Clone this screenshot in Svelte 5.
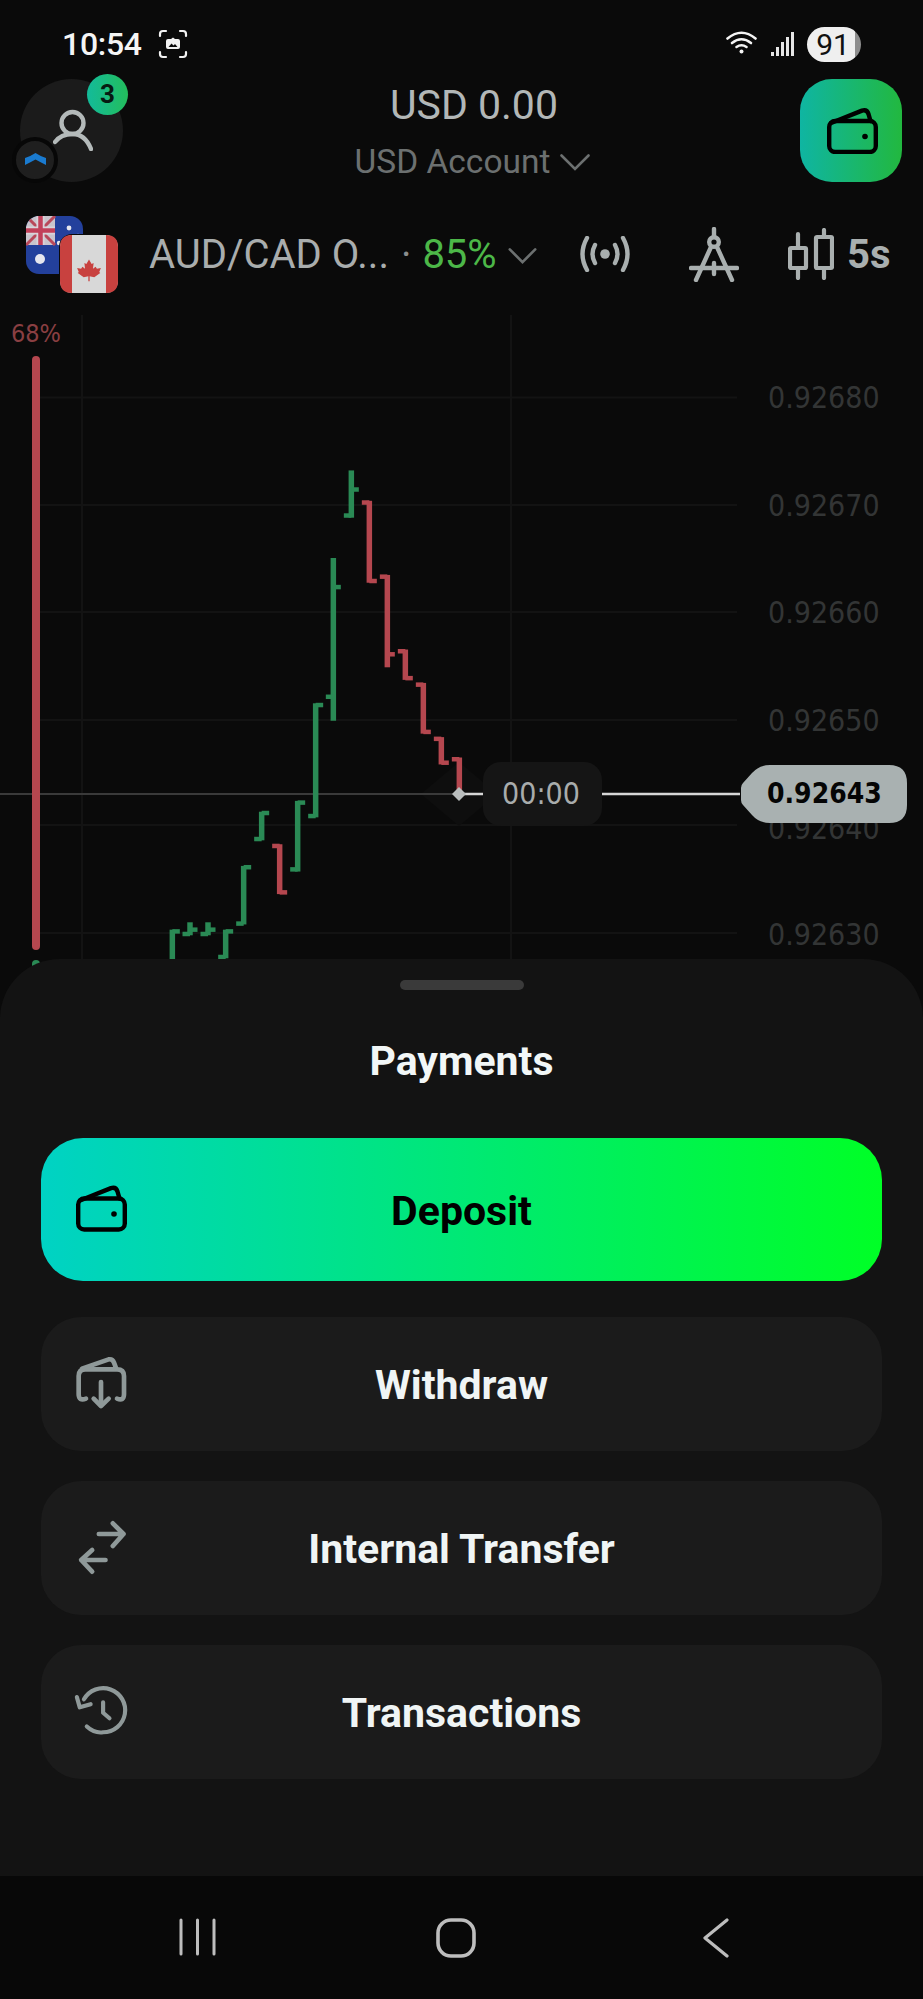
<script>
	// bars measured as [x, top, bottom, leftTickY, rightTickY]
	const zx = (v) => v / 3
	const zy = (v) => 300 + v / 2.306

	const bars = [
		['g', 517, 1452, 1530, 1530, 1456],
		['g', 570, 1435, 1465, 1462, 1452],
		['g', 624, 1435, 1465, 1462, 1452],
		['g', 677, 1452, 1518, 1515, 1456],
		['g', 731, 1305, 1440, 1438, 1308],
		['g', 785, 1180, 1246, 1243, 1183],
		['r', 839, 1255, 1370, 1259, 1366],
		['g', 893, 1155, 1318, 1313, 1159],
		['g', 947, 930, 1193, 1190, 934],
		['g', 1000, 595, 970, 915, 662],
		['g', 1054, 393, 502, 497, 437],
		['r', 1108, 463, 652, 467, 648],
		['r', 1162, 634, 847, 638, 817],
		['r', 1216, 806, 876, 810, 872],
		['r', 1270, 883, 1000, 887, 996],
		['r', 1324, 1008, 1071, 1012, 1067],
		['r', 1378, 1055, 1140, 1059, null]
	]

	const gridY = [397.5, 505, 612, 720, 825, 933]
	const axis = [
		{ y: 397, text: '0.92680' },
		{ y: 505, text: '0.92670' },
		{ y: 612, text: '0.92660' },
		{ y: 720, text: '0.92650' },
		{ y: 828, text: '0.92640' },
		{ y: 934, text: '0.92630' }
	]

	const actions = [
		{ label: 'Withdraw', icon: 'withdraw' },
		{ label: 'Internal Transfer', icon: 'transfer' },
		{ label: 'Transactions', icon: 'history' }
	]
</script>

{#snippet wallet()}
	<svg class="wallet" viewBox="0 0 51 46" fill="none" stroke="#000" stroke-width="4.4" stroke-linejoin="round" stroke-linecap="round">
		<rect x="2.2" y="13" width="46.6" height="31" rx="6" />
		<path d="M4 15 L35 2.6 Q40 1.2 41.5 6 L43.5 13" />
		<circle cx="38" cy="28.5" r="2.8" fill="#000" stroke="none" />
	</svg>
{/snippet}

<div class="screen">
	<div class="status">
		<div class="status-left">
			<span class="time">10:54</span>
			<svg class="capture" viewBox="0 0 30 30" fill="none" stroke="#f2f2f2" stroke-width="2.2" stroke-linecap="round">
				<path d="M2 7V5Q2 2 5 2H8M22 2H25Q28 2 28 5V7M28 23V25Q28 28 25 28H22M8 28H5Q2 28 2 25V23" />
				<path d="M8 12Q8 10 10 10H13L15 8.5L17 10H20Q22 10 22 12V18Q22 20 20 20H10Q8 20 8 18Z" fill="#f2f2f2" stroke="none" />
				<path d="M10.5 18L13.5 14.5L15.5 16.5L17 15L19.5 18Z" fill="#0a0a0a" stroke="none" />
			</svg>
		</div>
		<div class="status-right">
			<svg class="wifi" viewBox="0 0 31 24" fill="none" stroke="#f4f4f4" stroke-width="2.6" stroke-linecap="round">
				<path d="M1.5 8.5Q15.5 -3 29.5 8.5" />
				<path d="M6 13Q15.5 5.5 25 13" />
				<path d="M10.5 17Q15.5 13.5 20.5 17" />
				<circle cx="15.5" cy="21.5" r="2" fill="#f4f4f4" stroke="none" />
			</svg>
			<svg class="signal" viewBox="0 0 24 24" fill="#e6e6e6">
				<rect x="0" y="20" width="3" height="4" />
				<rect x="5" y="15" width="3" height="9" />
				<rect x="10" y="10" width="3" height="14" />
				<rect x="15" y="5" width="3" height="19" />
				<rect x="20" y="0" width="3" height="24" />
			</svg>
			<div class="battery"><span>91</span></div>
		</div>
	</div>

	<header class="account">
		<div class="avatar">
			<svg class="person" viewBox="0 0 40 42" fill="none" stroke="#b4baba" stroke-width="4.4" stroke-linecap="round">
				<circle cx="19.5" cy="14" r="11" />
				<path d="M2 33Q8 25 19.5 25Q32 25 38 40" />
			</svg>
			<span class="badge">3</span>
			<div class="level">
				<svg viewBox="0 0 21 12" fill="#1a7bd0"><path d="M0 5Q6 3 10.5 0Q15 3 21 5V12Q15 9 10.5 6.5Q6 9 0 12Z" /></svg>
			</div>
		</div>
		<div class="balance">
			<div class="amount">USD 0.00</div>
			<div class="account-name">
				USD Account
				<svg class="chev" viewBox="0 0 30 17" fill="none" stroke="#6c7070" stroke-width="2.6" stroke-linecap="round"><path d="M1.5 1.5L15 15L28.5 1.5" /></svg>
			</div>
		</div>
		<button class="wallet-btn">{@render wallet()}</button>
	</header>

	<div class="toolbar">
		<svg class="flags" viewBox="0 0 92 77">
			<defs>
				<clipPath id="aus"><rect x="0" y="0" width="57" height="58" rx="13" /></clipPath>
			</defs>
			<g clip-path="url(#aus)">
				<rect width="57" height="58" fill="#23409c" />
				<rect width="29" height="29" fill="#c9c4cc" />
				<path d="M0 0L29 29M29 0L0 29" stroke="#b9485a" stroke-width="3" />
				<path d="M14.5 0V29M0 14.5H29" stroke="#d9d4da" stroke-width="8" />
				<path d="M14.5 0V29M0 14.5H29" stroke="#c2405a" stroke-width="4.5" />
				<circle cx="14" cy="43" r="5" fill="#e6e6ee" />
				<circle cx="43" cy="12" r="2.4" fill="#e6e6ee" />
				<circle cx="52" cy="20" r="2.2" fill="#e6e6ee" />
				<circle cx="33" cy="27" r="2.2" fill="#e6e6ee" />
			</g>
			<rect x="33" y="18" width="59" height="59" rx="13" fill="#0a0a0a" />
			<rect x="34" y="19" width="58" height="58" rx="12" fill="#d8d8d8" />
			<path d="M46 19Q34 19 34 31V65Q34 77 46 77ZM80 19V77Q92 77 92 65V31Q92 19 80 19Z" fill="#c8413f" />
			<g transform="translate(63 54) scale(0.66) translate(-63 -54)">
				<path d="M63 38L67 45L70 43.5L69 52L73 49L75 52L81 51L78.5 57L80 58.5L71 65L64 63.5V71H62V63.5L55 65L46 58.5L47.5 57L45 51L51 52L53 49L57 52L56 43.5L59 45Z" fill="#c8413f" />
			</g>
		</svg>
		<div class="pair">
			<span class="pair-name">AUD/CAD O...</span>
			<span class="dot">·</span>
			<span class="payout">85%</span>
			<svg class="chev small" viewBox="0 0 30 17" fill="none" stroke="#6c7070" stroke-width="2.8" stroke-linecap="round"><path d="M1.5 1.5L15 15L28.5 1.5" /></svg>
		</div>
		<svg class="signal-tool" viewBox="0 0 52 36" fill="none" stroke="#a9afaf" stroke-width="4.4" stroke-linecap="round">
			<path d="M8 2Q-1 18 8 34" />
			<path d="M16 9Q11 18 16 27" />
			<path d="M36 9Q41 18 36 27" />
			<path d="M44 2Q53 18 44 34" />
			<circle cx="26" cy="18" r="4.8" fill="#a9afaf" stroke="none" />
		</svg>
		<svg class="compass" viewBox="0 0 50 55" fill="none" stroke="#a9afaf" stroke-width="4.4" stroke-linecap="round">
			<path d="M25 2V10" />
			<circle cx="25" cy="15" r="4.8" />
			<path d="M22 20L7 53M28 20L43 53" />
			<path d="M2 41H48" />
			<path d="M25 36V47" />
		</svg>
		<div class="period">
			<svg class="candles" viewBox="0 0 46 52" fill="none" stroke="#a9afaf" stroke-width="4.2" stroke-linecap="round">
				<rect x="2" y="20" width="16" height="20" rx="1" />
				<path d="M10 6V20M10 40V50" />
				<rect x="28" y="9" width="16" height="31" rx="1" />
				<path d="M36 2V9M36 40V50" />
			</svg>
			<span>5s</span>
		</div>
	</div>

	<div class="chart">
		<svg class="plot" viewBox="0 300 923 719" width="923" height="719">
			{#each gridY as y}
				<line x1="40" x2="737" y1={y} y2={y} class="grid" />
			{/each}
			<line x1="82" x2="82" y1="315" y2="1000" class="grid" />
			<line x1="511" x2="511" y1="315" y2="1000" class="grid" />

			<path d="M459 762L497 794L459 826L421 794Z" fill="#0e0e0e" />
			<line x1="0" x2="459" y1="794" y2="794" stroke="#3a3a3a" stroke-width="2" />

			<text x="11" y="342" class="side">68%</text>
			<rect x="32" y="356" width="8" height="594" rx="4" fill="#b5474f" />
			<rect x="32" y="960" width="8" height="30" rx="4" fill="#2a8a55" />

			{#each bars as [c, x, top, bottom, left, right]}
				<g class={c === 'g' ? 'up' : 'down'}>
					<line x1={zx(x)} x2={zx(x)} y1={zy(top)} y2={zy(bottom)} stroke-width="5.5" />
					<line x1={zx(x) - 7.5} x2={zx(x)} y1={zy(left)} y2={zy(left)} stroke-width="4.5" />
					{#if right !== null}
						<line x1={zx(x)} x2={zx(x) + 7.5} y1={zy(right)} y2={zy(right)} stroke-width="4.5" />
					{/if}
				</g>
			{/each}

			{#each axis as a}
				<text x="768" y={a.y} class="axis" dominant-baseline="central">{a.text}</text>
			{/each}

			<line x1="459" x2="484" y1="794" y2="794" stroke="#d6d6d6" stroke-width="2.5" />
			<line x1="602" x2="740" y1="794" y2="794" stroke="#d6d6d6" stroke-width="2.5" />
			<path d="M459 787L466 794L459 801L452 794Z" fill="#b9bdbd" />

			<rect x="483" y="762" width="119" height="64" rx="18" fill="#151515" />
			<text x="541" y="793" class="timer" text-anchor="middle" dominant-baseline="central">00:00</text>

			<path d="M741 788Q741 785 743 783L752 773Q759 765 770 765H889Q907 765 907 783V805Q907 823 889 823H770Q759 823 752 815L743 805Q741 803 741 800Z" fill="#a9b1b1" />
			<text x="767" y="793" class="price" dominant-baseline="central">0.92643</text>
		</svg>
	</div>

	<section class="sheet">
		<div class="handle"></div>
		<h2>Payments</h2>
		<button class="row deposit">
			{@render wallet()}
			<span>Deposit</span>
		</button>
		<div class="list">
			{#each actions as a}
				<button class="row plain">
					{#if a.icon === 'withdraw'}
						<svg class="row-icon" viewBox="76 50 165 165" fill="none" stroke="#8f9999" stroke-width="14" stroke-linecap="round" stroke-linejoin="round">
							<path d="M112 178Q90 186 90 165V110Q90 90 110 90H205Q226 90 226 110V165Q226 186 205 178" />
							<path d="M100 88L180 60Q192 58 196 70L202 86" />
							<path d="M157 128V192" />
							<path d="M135 178L157 200L180 178" />
						</svg>
					{:else if a.icon === 'transfer'}
						<svg class="row-icon" viewBox="76 540 160 165" fill="none" stroke="#8f9999" stroke-width="14" stroke-linecap="round" stroke-linejoin="round">
							<path d="M148 582H222M190 550L222 582L190 618" />
							<path d="M168 660H95M128 630L95 660L128 695" />
						</svg>
					{:else}
						<svg class="row-icon" viewBox="66 1035 172 172" fill="none" stroke="#8f9999" stroke-width="13" stroke-linecap="round" stroke-linejoin="round">
							<path d="M106 1168Q130 1190 157 1186A69 69 0 1 0 97 1083" />
							<path d="M75 1076L84 1108L118 1098" />
							<path d="M157 1092V1125L177 1142" />
						</svg>
					{/if}
					<span>{a.label}</span>
				</button>
			{/each}
		</div>
	</section>

	<nav class="navbar">
		<svg class="recents" viewBox="0 0 37 38" fill="none" stroke="#bdbdbd" stroke-width="3" stroke-linecap="round">
			<path d="M2 2V36M18.5 2V36M35 2V36" />
		</svg>
		<svg class="home" viewBox="0 0 40 40" fill="none" stroke="#bdbdbd" stroke-width="3.6">
			<rect x="2" y="2" width="36" height="36" rx="13" />
		</svg>
		<svg class="back" viewBox="0 0 26 40" fill="none" stroke="#bdbdbd" stroke-width="3.2" stroke-linecap="round" stroke-linejoin="round">
			<path d="M24 2L2 20L24 38" />
		</svg>
	</nav>
</div>

<style>
	:global(body) {
		margin: 0;
		background: #0a0a0a;
	}

	.screen {
		width: 923px;
		height: 1999px;
		overflow: hidden;
		display: flex;
		flex-direction: column;
		background: #0a0a0a;
		font-family: Roboto, "Liberation Sans", sans-serif;
	}

	button {
		border: none;
		font-family: inherit;
		padding: 0;
	}

	/* status bar */
	.status {
		height: 79px;
		flex: none;
		display: flex;
		justify-content: space-between;
		align-items: flex-start;
		padding: 26px 63px 0 62px;
		box-sizing: border-box;
	}
	.status-left {
		display: flex;
		align-items: center;
		gap: 16px;
		height: 36px;
	}
	.time {
		color: #f5f5f5;
		font-size: 32px;
		font-weight: 500;
		letter-spacing: -0.3px;
	}
	.capture {
		width: 30px;
		height: 30px;
	}
	.status-right {
		display: flex;
		align-items: center;
		height: 36px;
	}
	.wifi {
		width: 31px;
		height: 24px;
		margin-right: 14px;
		margin-top: -4px;
	}
	.signal {
		width: 24px;
		height: 24px;
		margin-right: 12px;
	}
	.battery {
		width: 54px;
		height: 35px;
		border-radius: 18px;
		margin-right: -1px;
		background: linear-gradient(90deg, #efefef 88%, #8d8d8d 88%);
		color: #111;
		font-size: 30px;
		text-align: center;
		line-height: 35px;
	}
	.battery span {
		display: inline-block;
		margin-left: -2px;
	}

	/* account row */
	.account {
		height: 103px;
		flex: none;
		display: grid;
		grid-template-columns: 103px 1fr 102px;
		padding: 0 21px 0 20px;
	}
	.avatar {
		position: relative;
		width: 103px;
		height: 103px;
		border-radius: 50%;
		background: #1b1b1b;
		display: flex;
		align-items: center;
		justify-content: center;
	}
	.person {
		width: 40px;
		height: 42px;
		margin-top: -1px;
		margin-left: 2px;
	}
	.badge {
		position: absolute;
		top: -5px;
		right: -5px;
		width: 41px;
		height: 41px;
		border-radius: 50%;
		background: linear-gradient(90deg, #13bb9a, #23bd5c);
		color: #071a12;
		font-size: 26px;
		font-weight: 700;
		text-align: center;
		line-height: 41px;
	}
	.level {
		position: absolute;
		left: -8px;
		bottom: -1px;
		width: 38px;
		height: 38px;
		border: 4px solid #070707;
		border-radius: 50%;
		background: #1f1f1f;
		display: flex;
		align-items: center;
		justify-content: center;
	}
	.level svg {
		width: 21px;
		height: 12px;
		margin-top: -3px;
	}
	.balance {
		display: flex;
		flex-direction: column;
		align-items: center;
		padding: 1px 0 0 25px;
	}
	.amount {
		color: #b2b7b7;
		font-size: 41px;
		line-height: 50px;
	}
	.account-name {
		color: #6c7070;
		font-size: 33.5px;
		line-height: 46px;
		margin: 9px 0 0 -3px;
		display: flex;
		align-items: center;
		gap: 10px;
	}
	.chev {
		width: 30px;
		height: 17px;
	}
	.wallet-btn {
		width: 102px;
		height: 103px;
		border-radius: 32px;
		background: linear-gradient(90deg, #0fb5a2, #22b83f);
		display: flex;
		align-items: center;
		justify-content: center;
	}
	.wallet-btn .wallet {
		margin-left: 2px;
	}
	.wallet {
		width: 51px;
		height: 46px;
	}

	/* instrument row */
	.toolbar {
		height: 118px;
		flex: none;
		display: flex;
		align-items: center;
		padding: 26px 0 0 26px;
		box-sizing: border-box;
	}
	.flags {
		width: 92px;
		height: 77px;
	}
	.pair {
		display: flex;
		align-items: center;
		margin-left: 31px;
		font-size: 40px;
		color: #a9adad;
		width: 395px;
		white-space: nowrap;
	}
	.dot {
		margin-left: 12px;
		color: #8a8e8e;
	}
	.payout {
		margin-left: 11px;
		color: #4cb748;
	}
	.chev.small {
		margin-left: 11px;
		margin-top: 4px;
		width: 29px;
		height: 16px;
	}
	.signal-tool {
		width: 52px;
		height: 36px;
		margin-left: 35px;
		margin-right: 58px;
	}
	.compass {
		width: 50px;
		height: 55px;
		margin-right: 49px;
	}
	.period {
		display: flex;
		align-items: center;
		gap: 13px;
		color: #a9afaf;
		font-size: 40px;
		font-weight: 700;
	}
	.candles {
		width: 46px;
		height: 52px;
	}

	/* chart */
	.chart {
		height: 719px;
		flex: none;
	}
	.plot {
		display: block;
	}
	.grid {
		stroke: #131313;
		stroke-width: 2;
	}
	.up line {
		stroke: #2a8a55;
	}
	.down line {
		stroke: #b5474f;
	}
	.axis {
		fill: #333535;
		font-family: "DejaVu Sans Condensed", "DejaVu Sans", sans-serif;
		font-size: 30px;
	}
	.side {
		fill: #8a3f42;
		font-family: "DejaVu Sans Condensed", "DejaVu Sans", sans-serif;
		font-size: 25px;
	}
	.timer {
		fill: #a8acac;
		font-family: "DejaVu Sans Condensed", "DejaVu Sans", sans-serif;
		font-size: 30px;
	}
	.price {
		fill: #050505;
		font-family: "DejaVu Sans Condensed", "DejaVu Sans", sans-serif;
		font-weight: 700;
		font-size: 28px;
	}

	/* payments sheet */
	.sheet {
		position: relative;
		flex: 1;
		margin-top: -60px;
		background: #131313;
		border-radius: 60px 60px 0 0;
		padding: 21px 41px 0;
		display: flex;
		flex-direction: column;
	}
	.handle {
		width: 124px;
		height: 10px;
		border-radius: 5px;
		background: #3a3a3a;
		align-self: center;
	}
	h2 {
		margin: 44px 0 0;
		text-align: center;
		color: #f2f7f7;
		font-size: 41px;
		font-weight: 700;
		line-height: 54px;
	}
	.row {
		display: grid;
		grid-template-columns: 55px 1fr 55px;
		align-items: center;
		padding: 0 34px;
		width: 841px;
		box-sizing: border-box;
		font-size: 41px;
		font-weight: 700;
	}
	.row span {
		text-align: center;
		margin-top: 2px;
	}
	.deposit {
		height: 143px;
		margin-top: 50px;
		border-radius: 42px;
		background: linear-gradient(90deg, #00d2c4, #00ff26);
		color: #000;
	}
	.deposit .wallet {
		height: 47px;
		margin-top: -2px;
		margin-left: 1px;
	}
	.list {
		margin-top: 36px;
		display: flex;
		flex-direction: column;
		gap: 30px;
	}
	.plain {
		height: 134px;
		border-radius: 40px;
		background: #1b1b1b;
		color: #f0f5f5;
	}
	.row-icon {
		width: 55px;
		height: 55px;
		margin-top: -1px;
		margin-left: -1px;
	}

	/* android nav */
	.navbar {
		height: 123px;
		flex: none;
		background: #080808;
		position: relative;
		display: grid;
		grid-template-columns: 179px 37px 220px 40px 227px 26px;
		align-items: start;
		padding-top: 42px;
		box-sizing: border-box;
	}
	.recents {
		grid-column: 2;
		width: 37px;
		height: 38px;
	}
	.home {
		grid-column: 4;
		width: 40px;
		height: 40px;
	}
	.back {
		grid-column: 6;
		width: 26px;
		height: 40px;
	}
</style>
